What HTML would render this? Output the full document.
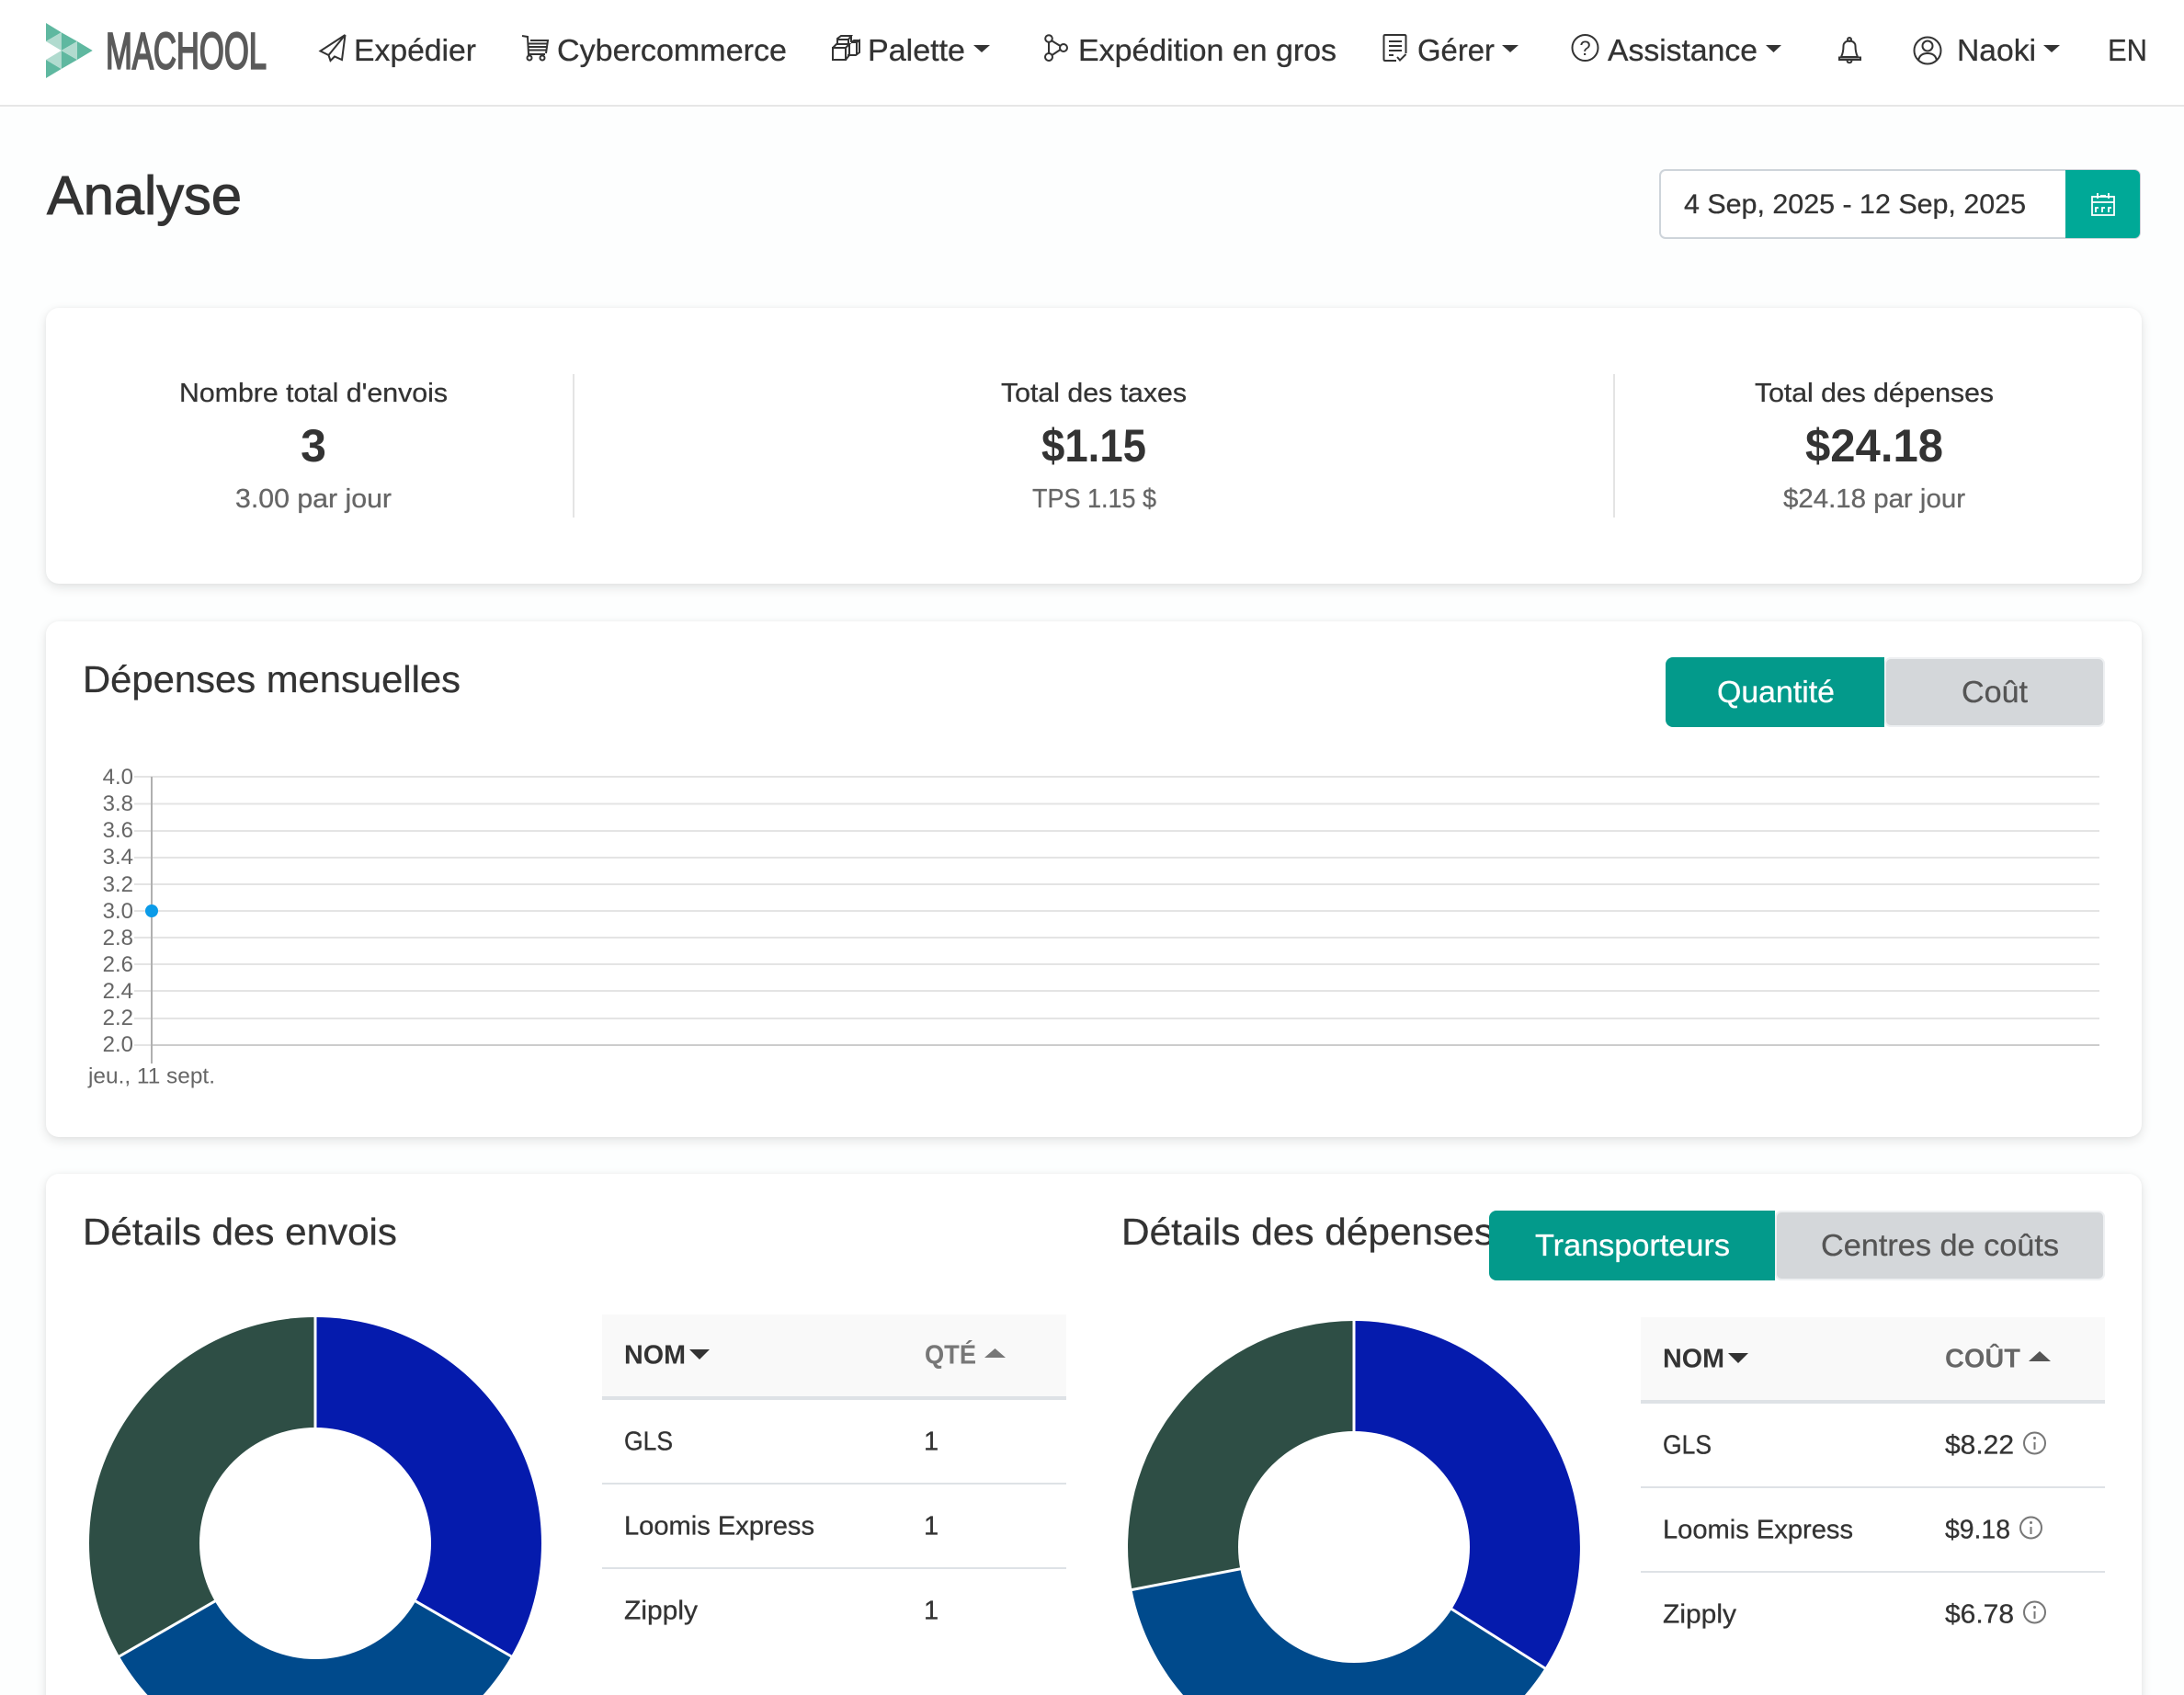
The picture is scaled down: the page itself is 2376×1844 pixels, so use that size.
<!DOCTYPE html>
<html lang="fr">
<head>
<meta charset="utf-8">
<title>Analyse</title>
<style>
html,body{margin:0;padding:0;width:2376px;height:1844px;overflow:hidden;background:#fdfefe;font-family:"Liberation Sans",sans-serif}
#page{position:relative;width:2376px;height:1844px;overflow:hidden;background:#fdfefe}
#hdr{position:absolute;left:0;top:0;width:2376px;height:114px;background:#fff;border-bottom:2px solid #e6e6e6}
.card{position:absolute;left:50px;width:2280px;background:#fff;border-radius:14px;box-shadow:0 4px 12px rgba(0,0,0,.11),0 0 4px rgba(0,0,0,.04)}
svg{position:absolute;left:0;top:0}
text{font-family:"Liberation Sans",sans-serif;fill:#333;stroke:#333;stroke-width:.3}
.n{font-size:33px}
.s{font-size:29px}
.sub{font-size:29px;fill:#666;stroke:#666}
.v{font-size:50px;font-weight:bold;stroke:none}
.t{font-size:41px}
.b{font-size:33px}
.c{font-size:24px;fill:#666;stroke:none}
.th{font-size:29px;font-weight:bold;stroke:none}
.i{fill:none;stroke:#333;stroke-width:2}
</style>
</head>
<body>
<div id="page">
<div id="hdr"></div>
<div class="card" style="top:335px;height:300px"></div>
<div class="card" style="top:676px;height:561px"></div>
<div class="card" style="top:1277px;height:620px"></div>
<svg width="2376" height="1844" viewBox="0 0 2376 1844" xmlns="http://www.w3.org/2000/svg">
<!-- logo -->
<g fill="#5fb8a0">
<path d="M50 25L66.7 35.3 50 45Z"/><path d="M66.7 35.3L84 45 66.7 55Z"/><path d="M84 45L100.7 55 84 65Z"/><path d="M66.7 55L84 65 66.7 75Z"/><path d="M50 65L66.7 75 50 85Z"/>
</g>
<g fill="#b1dbcf">
<path d="M50 45L66.7 35.3V55Z"/><path d="M84 45L66.7 55 84 65Z"/><path d="M50 65L66.7 55V75Z"/>
</g>
<text x="115" y="74.500" textLength="175" lengthAdjust="spacingAndGlyphs" style="font-size:56px;fill:#5a5a5a;stroke:#5a5a5a;stroke-width:2.200">MACHOOL</text>

<!-- nav icons -->
<path class="i" d="M375.5 38L348.5 55.5 357.5 60ZM357.5 60L359.5 66 364 61.5 372 65 375.5 38"/>
<g class="i"><path d="M568 39L574 40 575 59H593M577 44H596L594 58M575 47.500H595M575 51H595M575 54.500H594"/><circle cx="576" cy="63" r="2.500"/><circle cx="590" cy="63" r="2.500"/></g>
<g class="i"><path d="M906 52H920V65H906ZM906 52L910 48H924L920 52M924 48V60L920 65"/><path d="M911 48V42L915 39H926L923 43H911M923 43V48M926 39V46M926 46H932L935 44V57L931 60H922M932 46V60M926 46L929 44H935"/></g>
<g class="i"><circle cx="1141" cy="42" r="3.800"/><circle cx="1157" cy="52" r="4"/><circle cx="1141" cy="62" r="4"/><path d="M1141 46V58M1144.500 44.500L1153.500 50M1144.500 60L1153.500 54"/></g>
<g class="i"><path d="M1519 66H1507Q1505.500 66 1505.500 64.500V39.500Q1505.500 38 1507 38H1528Q1529.500 38 1529.500 39.500V58"/><path d="M1511 45H1525M1511 50H1525M1511 55H1525M1511 60H1516M1520 62L1523 65.500 1529.500 59"/></g>
<circle class="i" cx="1724.500" cy="52" r="14"/>
<text x="1724.500" y="60" text-anchor="middle" style="font-size:22px;stroke:none">?</text>
<g class="i"><circle cx="2012" cy="43" r="2"/><path d="M2003 62C2005 58 2005.500 53 2005.500 50 2005.500 47 2008 44.500 2012 44.500 2016 44.500 2018.500 47 2018.500 50 2018.500 53 2019 58 2021 62Z"/><path d="M2001 62.500H2024V65H2001ZM2009.500 66C2010 69 2014 69 2014.500 66"/></g>
<g class="i"><circle cx="2097" cy="55" r="14.500"/><circle cx="2097" cy="50" r="5.500"/><path d="M2087 66C2088 60 2092 58 2097 58 2102 58 2106 60 2107 66"/></g>

<!-- nav text -->
<text class="n" x="385" y="66" textLength="133" lengthAdjust="spacingAndGlyphs">Expédier</text>
<text class="n" x="606" y="66" textLength="250" lengthAdjust="spacingAndGlyphs">Cybercommerce</text>
<text class="n" x="944" y="66" textLength="106" lengthAdjust="spacingAndGlyphs">Palette</text>
<path d="M1059 49H1077L1068 57Z" fill="#333"/>
<text class="n" x="1173" y="66" textLength="281" lengthAdjust="spacingAndGlyphs">Expédition en gros</text>
<text class="n" x="1542" y="66" textLength="84" lengthAdjust="spacingAndGlyphs">Gérer</text>
<path d="M1634 49H1652L1643 57Z" fill="#333"/>
<text class="n" x="1749" y="66" textLength="163" lengthAdjust="spacingAndGlyphs">Assistance</text>
<path d="M1921 49H1938L1929.500 57Z" fill="#333"/>
<text class="n" x="2129" y="66" textLength="86" lengthAdjust="spacingAndGlyphs">Naoki</text>
<path d="M2223 49H2241L2232 57Z" fill="#333"/>
<text class="n" x="2293" y="66" textLength="43" lengthAdjust="spacingAndGlyphs">EN</text>

<!-- page title -->
<text x="51" y="233" textLength="212" lengthAdjust="spacingAndGlyphs" style="font-size:59px;stroke:#333;stroke-width:1">Analyse</text>

<!-- date range -->
<rect x="1806" y="185" width="522" height="74" rx="6" fill="#fff" stroke="#ced4da" stroke-width="2"/>
<path d="M2247 185H2322A6 6 0 0 1 2328 191V253A6 6 0 0 1 2322 259H2247Z" fill="#00a997"/>
<text x="1832" y="232" textLength="372" lengthAdjust="spacingAndGlyphs" style="font-size:30px">4 Sep, 2025 - 12 Sep, 2025</text>
<g fill="none" stroke="#fff" stroke-width="1.800"><rect x="2276" y="214" width="24" height="20"/><path d="M2276 220H2300M2282 210V216M2294 210V216M2285 213H2291"/><path d="M2280 231V226H2283M2287 231V226H2290M2294 231V226H2297"/></g>

<!-- stats -->
<rect x="623" y="407" width="2" height="156" fill="#e4e4e4"/>
<rect x="1755" y="407" width="2" height="156" fill="#e4e4e4"/>
<text class="s" x="195" y="437" textLength="292" lengthAdjust="spacingAndGlyphs">Nombre total d'envois</text>
<text class="v" x="341" y="502" text-anchor="middle">3</text>
<text class="sub" x="256" y="552" textLength="170" lengthAdjust="spacingAndGlyphs">3.00 par jour</text>
<text class="s" x="1089" y="437" textLength="202" lengthAdjust="spacingAndGlyphs">Total des taxes</text>
<text class="v" x="1133" y="502" textLength="114" lengthAdjust="spacingAndGlyphs">$1.15</text>
<text class="sub" x="1123" y="552" textLength="135" lengthAdjust="spacingAndGlyphs">TPS 1.15 $</text>
<text class="s" x="1909" y="437" textLength="260" lengthAdjust="spacingAndGlyphs">Total des dépenses</text>
<text class="v" x="1964" y="502" textLength="150" lengthAdjust="spacingAndGlyphs">$24.18</text>
<text class="sub" x="1940" y="552" textLength="198" lengthAdjust="spacingAndGlyphs">$24.18 par jour</text>

<!-- monthly -->
<text class="t" x="90" y="753" textLength="411" lengthAdjust="spacingAndGlyphs">Dépenses mensuelles</text>
<path d="M1812 723A8 8 0 0 1 1820 715H2050V791H1820A8 8 0 0 1 1812 783Z" fill="#039a8b"/>
<rect x="2051" y="716" width="238" height="74" rx="6" fill="#d4d7da" stroke="#eef0f2" stroke-width="2"/>
<text class="b" x="1868" y="764" textLength="128" lengthAdjust="spacingAndGlyphs" style="fill:#fff;stroke:#fff">Quantité</text>
<text class="b" x="2134" y="764" textLength="72" lengthAdjust="spacingAndGlyphs" style="fill:#555;stroke:#555">Coût</text>

<!-- chart -->
<g stroke="#e4e4e4" stroke-width="2">
<path d="M146 845H2284M146 874.500H2284M146 904H2284M146 933H2284M146 962H2284M146 991H2284M146 1020H2284M146 1049H2284M146 1078H2284M146 1108H2284"/>
</g>
<path d="M146 1137H165" stroke="#e4e4e4" stroke-width="2"/>
<path d="M165 1137H2284" stroke="#ccc" stroke-width="2"/>
<path d="M165 845V1157" stroke="#b0b0b0" stroke-width="2"/>
<circle cx="165" cy="991" r="7" fill="#0b9be8"/>
<g text-anchor="end">
<text class="c" x="145" y="853">4.0</text>
<text class="c" x="145" y="882">3.8</text>
<text class="c" x="145" y="911">3.6</text>
<text class="c" x="145" y="940">3.4</text>
<text class="c" x="145" y="970">3.2</text>
<text class="c" x="145" y="999">3.0</text>
<text class="c" x="145" y="1028">2.8</text>
<text class="c" x="145" y="1057">2.6</text>
<text class="c" x="145" y="1086">2.4</text>
<text class="c" x="145" y="1115">2.2</text>
<text class="c" x="145" y="1144">2.0</text>
</g>
<text class="c" x="96" y="1178.500" textLength="138" lengthAdjust="spacingAndGlyphs">jeu., 11 sept.</text>

<!-- details left -->
<text class="t" x="90" y="1354" textLength="342" lengthAdjust="spacingAndGlyphs">Détails des envois</text>
<path fill="#051bad" d="M343 1433A246 246 0 0 1 556.04 1802L343 1679Z"/>
<path fill="#004a8c" d="M556.04 1802A246 246 0 0 1 129.96 1802L343 1679Z"/>
<path fill="#2e4e45" d="M129.96 1802A246 246 0 0 1 343 1433L343 1679Z"/>
<path d="M343 1431V1679L558 1803M343 1679L128 1803" fill="none" stroke="#fff" stroke-width="3"/>
<circle cx="343" cy="1679" r="126" fill="#fff"/>
<rect x="655" y="1430" width="505" height="89" fill="#f9f9f9"/>
<rect x="655" y="1519" width="505" height="4" fill="#dee2e6"/>
<rect x="655" y="1613" width="505" height="2" fill="#dee2e6"/>
<rect x="655" y="1705" width="505" height="2" fill="#dee2e6"/>
<text class="th" x="679" y="1483.500" textLength="67" lengthAdjust="spacingAndGlyphs">NOM</text>
<path d="M750 1468H772L761 1479Z" fill="#333"/>
<text class="th" x="1006" y="1483.500" textLength="56" lengthAdjust="spacingAndGlyphs" style="fill:#777">QTÉ</text>
<path d="M1071 1477H1094L1082.500 1467Z" fill="#777"/>
<text class="s" x="679" y="1577.500" textLength="53" lengthAdjust="spacingAndGlyphs">GLS</text>
<text class="s" x="1005" y="1577.500">1</text>
<text class="s" x="679" y="1669.500" textLength="207" lengthAdjust="spacingAndGlyphs">Loomis Express</text>
<text class="s" x="1005" y="1669.500">1</text>
<text class="s" x="679" y="1761.500" textLength="80" lengthAdjust="spacingAndGlyphs">Zipply</text>
<text class="s" x="1005" y="1761.500">1</text>

<!-- details right -->
<text class="t" x="1220" y="1354" textLength="405" lengthAdjust="spacingAndGlyphs">Détails des dépenses</text>
<path d="M1620 1325A8 8 0 0 1 1628 1317H1931V1393H1628A8 8 0 0 1 1620 1385Z" fill="#039a8b"/>
<rect x="1932" y="1318" width="357" height="74" rx="6" fill="#d4d7da" stroke="#eef0f2" stroke-width="2"/>
<text class="b" x="1670" y="1366" textLength="212" lengthAdjust="spacingAndGlyphs" style="fill:#fff;stroke:#fff">Transporteurs</text>
<text class="b" x="1981" y="1366" textLength="259" lengthAdjust="spacingAndGlyphs" style="fill:#555;stroke:#555">Centres de coûts</text>
<path fill="#051bad" d="M1473 1437A246 246 0 0 1 1680.700 1814.700L1473 1683Z"/>
<path fill="#004a8c" d="M1680.700 1814.700A246 246 0 0 1 1231.500 1729.700L1473 1683Z"/>
<path fill="#2e4e45" d="M1231.500 1729.700A246 246 0 0 1 1473 1437L1473 1683Z"/>
<path d="M1473 1435V1683L1682.500 1816M1473 1683L1229 1730" fill="none" stroke="#fff" stroke-width="3"/>
<circle cx="1473" cy="1683" r="126" fill="#fff"/>
<rect x="1785" y="1433" width="505" height="90" fill="#f9f9f9"/>
<rect x="1785" y="1523" width="505" height="4" fill="#dee2e6"/>
<rect x="1785" y="1617" width="505" height="2" fill="#dee2e6"/>
<rect x="1785" y="1709" width="505" height="2" fill="#dee2e6"/>
<text class="th" x="1809" y="1487.500" textLength="67" lengthAdjust="spacingAndGlyphs">NOM</text>
<path d="M1880 1472H1902L1891 1483Z" fill="#333"/>
<text class="th" x="2116" y="1487.500" textLength="82" lengthAdjust="spacingAndGlyphs" style="fill:#666">COÛT</text>
<path d="M2207 1481H2231L2219 1470Z" fill="#555"/>
<text class="s" x="1809" y="1581.500" textLength="53" lengthAdjust="spacingAndGlyphs">GLS</text>
<text class="s" x="2116" y="1581.500" textLength="75" lengthAdjust="spacingAndGlyphs">$8.22</text>
<text class="s" x="1809" y="1673.500" textLength="207" lengthAdjust="spacingAndGlyphs">Loomis Express</text>
<text class="s" x="2116" y="1673.500" textLength="71" lengthAdjust="spacingAndGlyphs">$9.18</text>
<text class="s" x="1809" y="1765.500" textLength="80" lengthAdjust="spacingAndGlyphs">Zipply</text>
<text class="s" x="2116" y="1765.500" textLength="75" lengthAdjust="spacingAndGlyphs">$6.78</text>
<g fill="none" stroke="#777" stroke-width="2">
<circle cx="2213.500" cy="1570" r="11.500"/><circle cx="2209.500" cy="1662" r="11.500"/><circle cx="2213.500" cy="1754" r="11.500"/>
<path d="M2213.500 1569V1577M2209.500 1661V1669M2213.500 1753V1761"/>
</g>
<g fill="#777"><circle cx="2213.500" cy="1564.500" r="1.500"/><circle cx="2209.500" cy="1656.500" r="1.500"/><circle cx="2213.500" cy="1748.500" r="1.500"/></g>
</svg>
</div>
</body>
</html>
